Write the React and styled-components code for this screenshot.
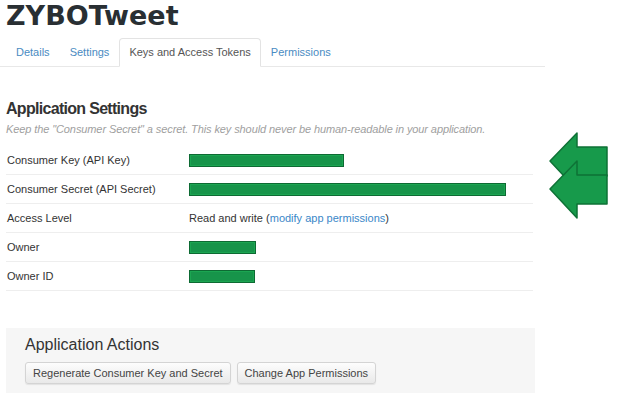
import styled, { createGlobalStyle } from "styled-components";

const GlobalStyle = createGlobalStyle`
  body {
    margin: 0;
    background: #fff;
    font-family: "Liberation Sans", Arial, sans-serif;
    color: #333;
  }
`;

const Page = styled.div`
  position: relative;
  width: 620px;
  height: 393px;
  overflow: hidden;
`;

const Title = styled.h1`
  margin: 0 0 0 6px;
  font-family: "DejaVu Sans", "Liberation Sans", sans-serif;
  font-size: 27px;
  line-height: 32px;
  font-weight: bold;
  color: #292f33;
`;

const TabBar = styled.ul`
  display: flex;
  list-style: none;
  margin: 6px 0 0 0;
  padding: 0 0 0 6px;
  width: 539px;
  border-bottom: 1px solid #e8e8e8;
`;

const Tab = styled.li`
  height: 27px;
  line-height: 27px;
  padding: 0 9px;
  margin-bottom: -1px;
  font-size: 11px;
  color: ${({ active }) => (active ? "#555" : "#4a8bc2")};
  background: ${({ active }) => (active ? "#fff" : "transparent")};
  border: 1px solid ${({ active }) => (active ? "#e3e3e3" : "transparent")};
  border-bottom-color: ${({ active }) => (active ? "#fff" : "transparent")};
  border-radius: 4px 4px 0 0;
`;

const Section = styled.section`
  margin: 32px 0 0 6px;
  width: 527px;
`;

const Heading = styled.h2`
  margin: 0;
  font-size: 16px;
  line-height: 20px;
  font-weight: bold;
  color: #333;
  letter-spacing: -0.7px;
`;

const Note = styled.p`
  margin: 4px 0 11px;
  font-size: 11px;
  font-style: italic;
  color: #a0a0a0;
  letter-spacing: -0.1px;
`;

const Row = styled.div`
  display: grid;
  grid-template-columns: 183px 1fr;
  align-items: center;
  height: 28px;
  border-bottom: 1px solid #eeeeee;
  font-size: 11px;
`;

const Label = styled.div`
  padding-left: 1px;
  color: #333;
`;

const Value = styled.div`
  color: #333;
`;

const Link = styled.a`
  color: #3a87c8;
  text-decoration: none;
`;

const Redacted = styled.div`
  box-sizing: border-box;
  width: ${({ w }) => w}px;
  height: 13px;
  background: #17944a;
  border: 1px solid #0d6a33;
  box-shadow: inset 0 0 0 1px #1ba551;
`;

const Actions = styled.div`
  margin: 37px 0 0 6px;
  width: 510px;
  padding: 8px 0 12px 19px;
  background: #f6f6f6;
`;

const ActionsTitle = styled.h3`
  margin: 0 0 8px;
  font-size: 16px;
  font-weight: normal;
  color: #333;
`;

const ButtonRow = styled.div`
  display: flex;
  gap: 6px;
`;

const Button = styled.button`
  height: 22px;
  padding: 0 7px;
  font-family: "Liberation Sans", Arial, sans-serif;
  font-size: 11px;
  color: #444;
  background: linear-gradient(#fdfdfd, #e9e9e9);
  border: 1px solid #d4d4d4;
  border-radius: 3px;
  box-shadow: 0 1px 1px rgba(0, 0, 0, 0.08);
`;

const Arrows = styled.svg`
  position: absolute;
  left: 545px;
  top: 129px;
`;

const arrow = (dy) =>
  `${5},${32 + dy} ${32},${4 + dy} ${32},${18 + dy} ${62},${18 + dy} ${62},${47 + dy} ${32},${47 + dy} ${32},${61 + dy}`;

export default function App() {
  return (
    <Page>
      <GlobalStyle />
      <Title>ZYBOTweet</Title>
      <TabBar>
        <Tab>Details</Tab>
        <Tab>Settings</Tab>
        <Tab active>Keys and Access Tokens</Tab>
        <Tab>Permissions</Tab>
      </TabBar>

      <Section>
        <Heading>Application Settings</Heading>
        <Note>
          Keep the "Consumer Secret" a secret. This key should never be
          human-readable in your application.
        </Note>
        <Row>
          <Label>Consumer Key (API Key)</Label>
          <Value>
            <Redacted w={155} />
          </Value>
        </Row>
        <Row>
          <Label>Consumer Secret (API Secret)</Label>
          <Value>
            <Redacted w={317} />
          </Value>
        </Row>
        <Row>
          <Label>Access Level</Label>
          <Value>
            Read and write (<Link href="#">modify app permissions</Link>)
          </Value>
        </Row>
        <Row>
          <Label>Owner</Label>
          <Value>
            <Redacted w={67} />
          </Value>
        </Row>
        <Row>
          <Label>Owner ID</Label>
          <Value>
            <Redacted w={66} />
          </Value>
        </Row>
      </Section>

      <Actions>
        <ActionsTitle>Application Actions</ActionsTitle>
        <ButtonRow>
          <Button>Regenerate Consumer Key and Secret</Button>
          <Button>Change App Permissions</Button>
        </ButtonRow>
      </Actions>

      <Arrows width="70" height="100" viewBox="0 0 70 100">
        <polygon points={arrow(0)} fill="#179a4b" stroke="#0e7236" strokeWidth="1.5" strokeLinejoin="round" />
        <polygon points={arrow(28)} fill="#179a4b" stroke="#0e7236" strokeWidth="1.5" strokeLinejoin="round" />
      </Arrows>
    </Page>
  );
}
